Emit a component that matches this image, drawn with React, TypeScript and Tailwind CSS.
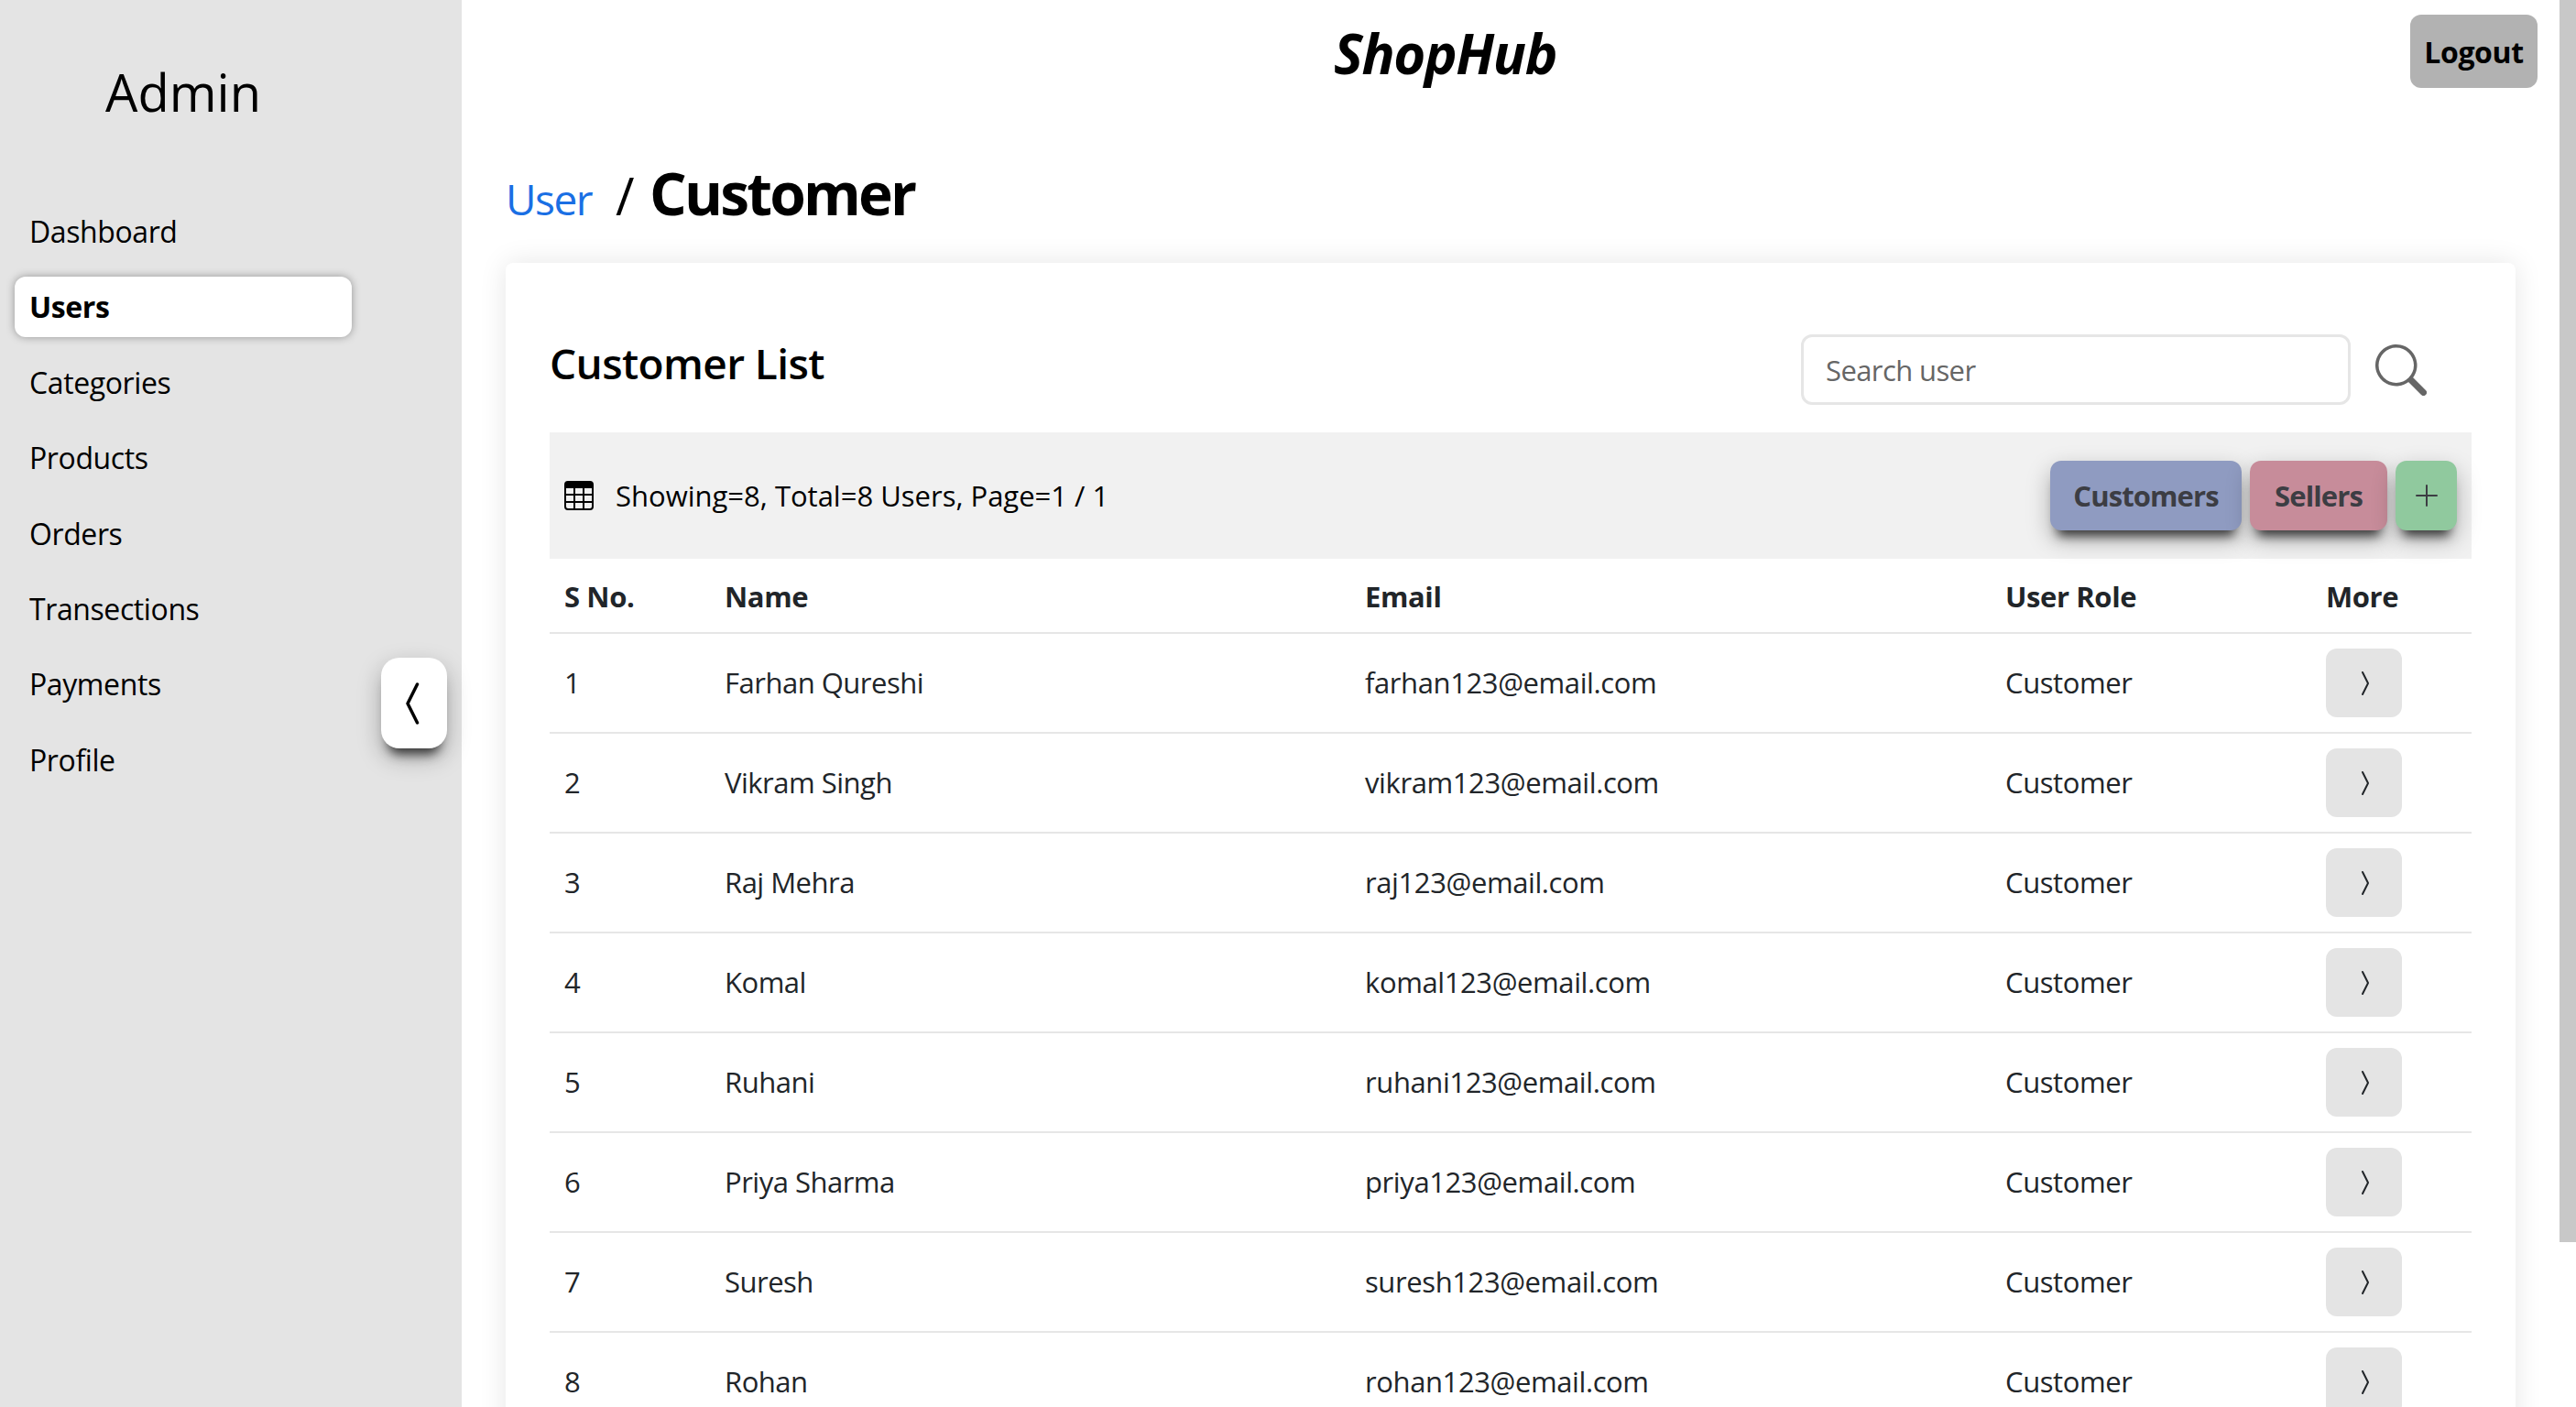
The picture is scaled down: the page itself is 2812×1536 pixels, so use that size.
import { BsChevronCompactLeft, BsChevronCompactRight, BsPlusLg, BsSearch, BsTable } from 'react-icons/bs'

const NAV = ['Dashboard', 'Users', 'Categories', 'Products', 'Orders', 'Transections', 'Payments', 'Profile']

const USERS = [
  { name: 'Farhan Qureshi', email: 'farhan123@email.com' },
  { name: 'Vikram Singh', email: 'vikram123@email.com' },
  { name: 'Raj Mehra', email: 'raj123@email.com' },
  { name: 'Komal', email: 'komal123@email.com' },
  { name: 'Ruhani', email: 'ruhani123@email.com' },
  { name: 'Priya Sharma', email: 'priya123@email.com' },
  { name: 'Suresh', email: 'suresh123@email.com' },
  { name: 'Rohan', email: 'rohan123@email.com' },
]

const COLS = 'grid grid-cols-[175px_699px_699px_350px_174px]'
const RAISED = 'shadow-[0_14px_12px_-8px_rgba(0,0,0,0.7),0_10px_26px_rgba(0,0,0,0.28)]'

function Sidebar() {
  return (
    <aside className="relative w-[504px] shrink-0 bg-[#e4e4e4] pl-4 pr-[120px] text-black">
      <h1 className="pt-[62px] text-center text-[56px] font-medium leading-[76px]">Admin</h1>
      <nav className="mt-[82px] flex flex-col">
        {NAV.map((label) => {
          const active = label === 'Users'
          return (
            <a
              key={label}
              className={`mb-[16.4px] flex h-[66px] items-center rounded-xl px-4 text-[32px] tracking-[-0.4px] ${
                active ? 'bg-white font-bold shadow-[0_0_10px_rgba(0,0,0,0.35)]' : ''
              }`}
            >
              {label}
            </a>
          )
        })}
      </nav>
      {/* collapse toggle */}
      <button className={`absolute left-[416px] top-[718px] flex h-[99px] w-[72px] items-center justify-center rounded-[20px] bg-white text-black ${RAISED}`}>
        <BsChevronCompactLeft size={56} />
      </button>
    </aside>
  )
}

function Toolbar() {
  return (
    <div className="flex h-[138px] items-center justify-between bg-[#f1f1f1] pl-4 pr-4 text-[#212529]">
      <div className="flex items-center gap-[24px] text-[31px] text-black">
        <BsTable size={32} />
        <span>Showing=8, Total=8 Users, Page=1 / 1</span>
      </div>
      <div className="flex gap-[9px] text-[31px] font-bold tracking-[-0.9px] text-[#3c3d43]">
        <button className={`h-[76px] w-[209px] rounded-xl bg-[#8f9bc1] ${RAISED}`}>Customers</button>
        <button className={`h-[76px] w-[150px] rounded-xl bg-[#c78c9a] ${RAISED}`}>Sellers</button>
        <button className={`flex h-[76px] w-[67px] items-center justify-center rounded-xl bg-[#90c99e] ${RAISED}`}>
          <BsPlusLg size={32} />
        </button>
      </div>
    </div>
  )
}

function Table() {
  return (
    <div className="text-[31px] tracking-[-0.4px] text-[#212529]">
      <div className={`${COLS} h-[82px] items-center border-b-2 border-[#e6e6e6] pt-[2px] font-bold`}>
        <div className="pl-4">S No.</div>
        <div className="pl-4">Name</div>
        <div className="pl-4">Email</div>
        <div className="pl-4">User Role</div>
        <div className="pl-4">More</div>
      </div>
      {USERS.map((u, i) => (
        <div key={u.email} className={`${COLS} h-[109px] items-center border-b-2 border-[#e6e6e6]`}>
          <div className="pl-4">{i + 1}</div>
          <div className="pl-4 tracking-[-0.5px]">{u.name}</div>
          <div className="pl-4">{u.email}</div>
          <div className="pl-4">Customer</div>
          <div className="pl-4">
            <button className="flex h-[75px] w-[83px] items-center justify-center rounded-xl bg-[#e4e4e4]">
              <BsChevronCompactRight size={32} />
            </button>
          </div>
        </div>
      ))}
    </div>
  )
}

export default function App() {
  return (
    <div className="flex h-[1536px] w-[2812px] overflow-hidden bg-white font-['Open_Sans','Noto_Sans',sans-serif]">
      <Sidebar />
      <main className="min-w-0 flex-1 pl-[48px] pr-[48px]">
        <header className="relative h-[155px]">
          <div className="pl-[904px] pt-[24px] text-[60px] font-bold italic leading-[68px] tracking-[-1.4px] text-black">ShopHub</div>
          <button className="absolute right-[-24px] top-[16px] h-[80px] w-[139px] rounded-xl bg-[#b2b2b2] pt-[2px] text-[32px] font-bold tracking-[-0.4px] text-black">
            Logout
          </button>
        </header>
        <div className="flex h-[132px] items-baseline pt-[8px] text-black">
          <span className="w-[120px] text-[46px] tracking-[-1.5px] text-[#1a6fe4]">User</span>
          <span className="w-[37px] text-[56px]">/</span>
          <span className="text-[64px] font-bold tracking-[-2.8px]">Customer</span>
        </div>
        <section className="h-[1400px] w-[2194px] rounded-lg bg-white px-[48px] shadow-[0_0_30px_rgba(0,0,0,0.1)]">
          <div className="flex h-[185px] items-start justify-between pt-[78px]">
            <h2 className="text-[46px] font-semibold leading-[62px] tracking-[-0.6px] text-black">Customer List</h2>
            <div className="flex items-center gap-[27px] pr-[49px]">
              <input
                placeholder="Search user"
                className="h-[77px] w-[600px] rounded-xl border-[3px] border-[#e6e6e6] bg-white px-[24px] text-[31px] tracking-[-0.6px] placeholder:text-[#666]"
              />
              <BsSearch size={56} className="text-[#666]" />
            </div>
          </div>
          <Toolbar />
          <Table />
        </section>
      </main>
      {/* page scrollbar */}
      <div className="w-[18px] shrink-0 bg-white">
        <div className="h-[1356px] bg-[#c8c8c8]" />
      </div>
    </div>
  )
}
